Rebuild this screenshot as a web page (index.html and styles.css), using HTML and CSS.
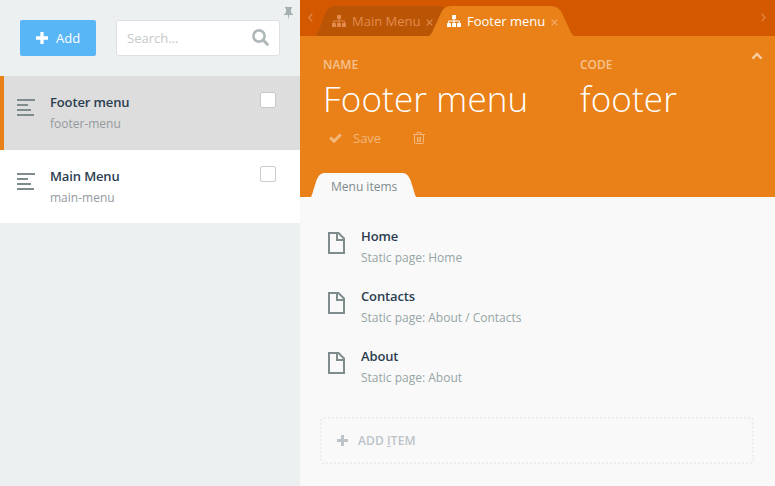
FILE: index.html
```
<!DOCTYPE html>
<html lang="en">
<head>
<meta charset="utf-8">
<title>Menus</title>
<link rel="stylesheet" href="styles.css">
</head>
<body>
<svg class="defs" width="0" height="0">
  <symbol id="plus" viewBox="0 0 11 11"><path d="M4 0h3v4h4v3H7v4H4V7H0V4h4z"/></symbol>
  <symbol id="lines" viewBox="0 0 18 17"><path d="M0 0h18v2H0zM0 5h11v2H0zM0 10h14v2H0zM0 15h17v2H0z"/></symbol>
  <symbol id="sitemap" viewBox="0 0 14 12"><path d="M5.500 0h3q.5 0 .5.5v3q0 .5-.5.5h-1v1.500H12q.8 0 .8.8V8h.7q.5 0 .5.5v3q0 .5-.5.5h-3q-.5 0-.5-.5v-3q0-.5.5-.5h1.300V6.500H7.500V8h1q.5 0 .5.5v3q0 .5-.5.5h-3q-.5 0-.5-.5v-3q0-.5.5-.5h1V6.500H2.200V8h1.300q.5 0 .5.5v3q0 .5-.5.5h-3q-.5 0-.5-.5v-3Q0 8 .5 8h.7V6.300q0-.8.8-.8h4.500V4h-1Q5 4 5 3.500v-3Q5 0 5.500 0z"/></symbol>
  <symbol id="page" viewBox="0 0 17 22"><path d="M1 1h9.500L16 6.500V21H1zM9 1v7h7" fill="none" stroke="currentColor" stroke-width="2"/></symbol>
  <symbol id="close" viewBox="0 0 7 7"><path d="M.7.7l5.600 5.600M6.300.7L.7 6.300" fill="none" stroke="currentColor" stroke-width="1.200"/></symbol>
</svg>
<div class="app">
  <aside class="sidebar">
    <div class="toolbar">
      <button class="add"><svg width="12" height="12"><use href="#plus"/></svg><span>Add</span></button>
      <div class="search"><span>Search...</span>
        <svg width="17" height="17" viewBox="0 0 17 17"><circle cx="7" cy="7" r="5.600" fill="none" stroke="currentColor" stroke-width="2.600"/><path d="M11 11l4.300 4.300" stroke="currentColor" stroke-width="3" stroke-linecap="round"/></svg>
      </div>
      <svg class="pin" width="9" height="13" viewBox="0 0 9 13"><path d="M1 0h7v1.500H7V5.500l2 1.700V8H5.200L4.500 12.500 3.800 8H0v-.8l2-1.700v-4H1z"/></svg>
    </div>
    <div class="entry active">
      <svg width="18" height="17"><use href="#lines"/></svg>
      <div class="text"><h4>Footer menu</h4><p>footer-menu</p></div><i class="check"></i>
    </div>
    <div class="entry">
      <svg width="18" height="17"><use href="#lines"/></svg>
      <div class="text"><h4>Main Menu</h4><p>main-menu</p></div><i class="check"></i>
    </div>
  </aside>
  <main class="main">
    <nav class="tabs">
      <svg class="arrow" width="5" height="9" viewBox="0 0 5 9"><path d="M4.300.7L.9 4.500l3.400 3.800"/></svg>
      <div class="tab">
        <svg class="shape" width="143" height="30" viewBox="0 0 143 30"><path d="M0 30C3 28 4 24 6 19L10 8Q13 0 20 0H123Q130 0 134 8L138 19C140 24 141 28 143 30z"/></svg>
        <svg class="icon" width="14" height="12"><use href="#sitemap"/></svg><span>Main Menu</span><svg class="x" width="7" height="7"><use href="#close"/></svg>
      </div>
      <div class="tab current">
        <svg class="shape" width="145" height="30" viewBox="0 0 145 30"><path d="M0 30C3 28 4 24 6 20L12 7Q15 0 22 0H122Q129 0 133 7L139 20C141 24 142 28 145 30z"/></svg>
        <svg class="icon" width="14" height="12"><use href="#sitemap"/></svg><span>Footer menu</span><svg class="x" width="7" height="7"><use href="#close"/></svg>
      </div>
      <svg class="arrow next" width="5" height="9" viewBox="0 0 5 9"><path d="M.7.7l3.400 3.800L.7 8.300"/></svg>
    </nav>
    <header class="head">
      <div class="fields">
        <div class="field name"><label>NAME</label><div class="value">Footer menu</div></div>
        <div class="field code"><label>CODE</label><div class="value">footer</div></div>
        <svg class="collapse" width="12" height="8" viewBox="0 0 12 8"><path d="M1.400 6.600L6 2l4.600 4.600" fill="none" stroke="currentColor" stroke-width="2.400"/></svg>
      </div>
      <div class="actions">
        <svg class="tick" width="13" height="10" viewBox="0 0 13 10"><path d="M1.300 4.700l3.700 3.500 6.700-6.700" fill="none" stroke="currentColor" stroke-width="3"/></svg><span>Save</span>
        <svg class="trash" width="12" height="12" viewBox="0 0 12 12"><path d="M0 2.500h12M4 2V.5h4V2M1.500 3v7.500q0 1 1 1h7q1 0 1-1V3M4.500 5v5M6 5v5M7.500 5v5" fill="none" stroke="currentColor"/></svg>
      </div>
      <div class="subtab">
        <svg class="shape" width="105" height="24" viewBox="0 0 105 24"><path d="M0 24C2 20 2 17 4 12Q7 0 13 0H92Q98 0 101 12C103 17 103 20 105 24z"/></svg><span>Menu items</span>
      </div>
    </header>
    <section class="items">
      <div class="item"><svg width="17" height="22"><use href="#page"/></svg><div class="text"><h4>Home</h4><p>Static page: Home</p></div></div>
      <div class="item"><svg width="17" height="22"><use href="#page"/></svg><div class="text"><h4>Contacts</h4><p>Static page: About / Contacts</p></div></div>
      <div class="item"><svg width="17" height="22"><use href="#page"/></svg><div class="text"><h4>About</h4><p>Static page: About</p></div></div>
      <div class="additem"><svg width="11" height="11"><use href="#plus"/></svg><span>ADD <u>I</u>TEM</span></div>
    </section>
  </main>
</div>
</body>
</html>
```
FILE: styles.css
```
* { box-sizing: border-box; }
body { margin: 0; font: 13px/20px "Open Sans", sans-serif; color: #2b3e50; overflow: hidden; }
.defs { position: absolute; }
svg { fill: currentColor; flex: none; display: block; }
h4, p { margin: 0; white-space: nowrap; }
h4 { font-size: 13px; line-height: 21px; font-weight: 600; letter-spacing: -.13px; }
p { font-size: 12px; line-height: 21px; color: #95a5a6; }
.app { display: flex; width: 775px; height: 486px; }

.sidebar { width: 300px; background: #ecf0f1; }
.toolbar { position: relative; display: flex; gap: 20px; height: 76px; padding: 20px 20px 20px; }
.add { display: flex; align-items: center; width: 76px; height: 36px; padding: 0 0 0 16px; gap: 8px; border: 0; border-radius: 2px; background: #58b6f7; color: #fff; font: inherit; }
.search { display: flex; align-items: center; justify-content: space-between; width: 164px; height: 36px; padding: 0 10px 0 10px; border: 1px solid #dde1e2; border-radius: 3px; background: #fff; color: #c5c9ca; }
.search svg { color: #afb8b9; margin-top: -2px; }
.pin { position: absolute; left: 284px; top: 7px; color: #a5afb1; }
.entry { display: flex; height: 73px; padding: 16px 24px 0 17px; background: #fff; }
.entry.active { height: 74px; padding-left: 13px; border-left: 4px solid #e98118; background: #dddddd; }
.entry > svg { margin-top: 7px; color: #7f8c8d; }
.entry .text { margin-left: 15px; flex: 1; }
.entry p { color: #949a9d; }
.check { width: 16px; height: 16px; border: 1px solid #ccc; border-radius: 2px; background: #fff; }
.entry.active .check { border-color: #c8c8c8; }

.main { width: 475px; background: #f9f9f9; }
.tabs { display: flex; height: 36px; background: #d35800; }
.arrow { margin: 13px 0 0 8px; fill: none; stroke: #e38a4b; stroke-width: 1.200; }
.arrow.next { margin-left: auto; margin-right: 9px; }
.tab { position: relative; display: flex; align-items: center; width: 143px; height: 30px; margin: 6px 0 0 2px; padding-left: 17px; color: #e28b4d; }
.tab .shape { position: absolute; left: 0; top: 0; color: #bb5506; }
.tab .icon, .tab span, .tab .x { position: relative; }
.tab span { margin: 0 6px 0 6px; white-space: nowrap; }
.tab .x { top: 1px; }
.tab:not(.current) .x { left: -1px; }
.tab.current { width: 145px; margin-left: -29px; padding-left: 18px; color: #fff; }
.tab.current .shape { color: #e98118; }
.tab.current .x { color: #f1ac6b; }

.head { height: 161px; background: #e98118; color: #fff; }
.fields { display: flex; height: 92px; padding: 19px 12px 0 23px; }
.field label { display: block; font-size: 12px; font-weight: 600; line-height: 20px; color: #f6c18e; }
.name { width: 257px; }
.value { font-size: 35px; line-height: 47px; font-weight: 300; letter-spacing: .15px; }
.collapse { margin: -3px 0 0 auto; color: #f8cda3; }
.actions { display: flex; align-items: center; height: 20px; padding-left: 29px; color: #f3b77c; }
.actions span { margin: 0 32px 0 11px; }
.subtab { position: relative; width: 105px; height: 24px; margin: 25px 0 0 11px; padding-left: 20px; font-size: 12px; line-height: 27px; color: #7f8c8d; }
.subtab .shape { position: absolute; left: 0; top: 0; color: #f9f9f9; }
.subtab span { position: relative; }

.items { padding: 29px 21px 0 20px; }
.item { display: flex; height: 60px; padding-left: 8px; }
.item svg { margin-top: 6px; color: #7f8c8d; }
.item .text { margin-left: 16px; }
.additem { display: flex; align-items: center; height: 47px; margin-top: 11px; padding-left: 15px; border: 2px dotted #ececec; border-radius: 4px; color: #bdc3c7; font-size: 12px; font-weight: 600; }
.additem span { margin-left: 10px; letter-spacing: .1px; }
```
